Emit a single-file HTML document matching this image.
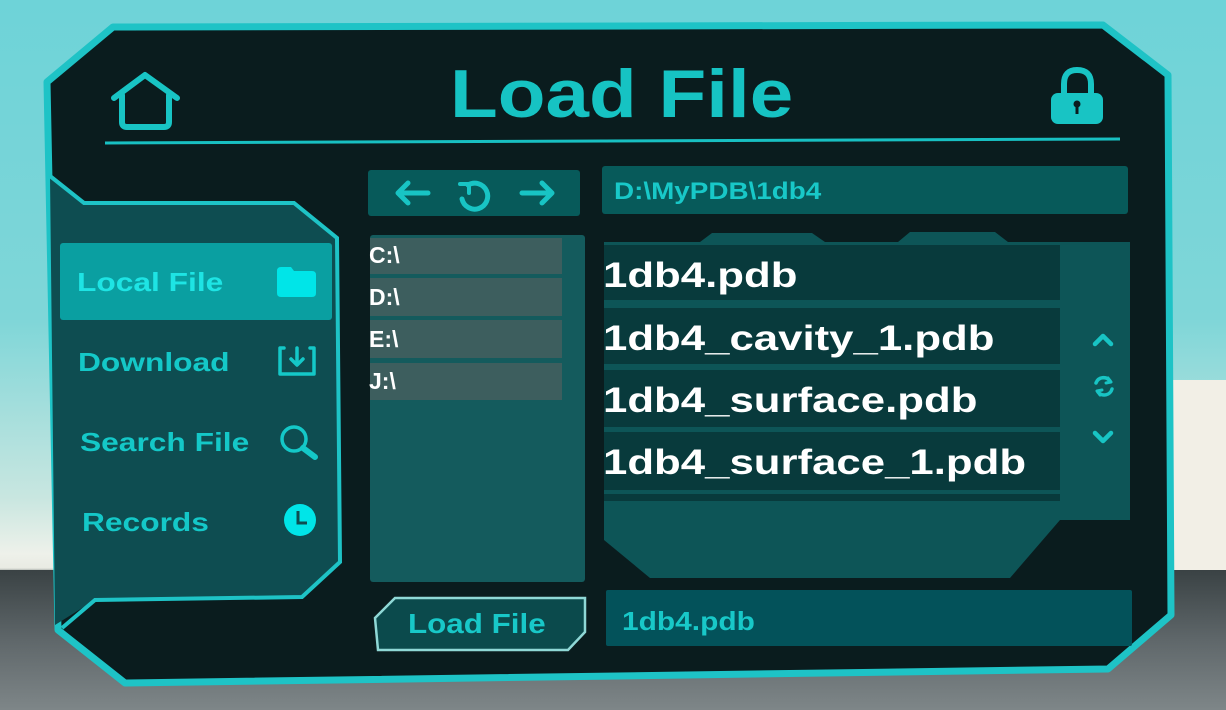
<!DOCTYPE html>
<html><head><meta charset="utf-8"><style>
body{margin:0;width:1226px;height:710px;overflow:hidden;position:relative;font-family:"Liberation Sans",Arial,sans-serif;font-weight:bold;
background:linear-gradient(180deg,#6ed3d8 0%,#7fd6d8 45%,#c8e6e0 70%,#eef1ea 78%,#e9ebe3 80%,#3c4446 81%,#6e7679 95%,#80888a 100%);}
.a{position:absolute}
.t{position:absolute;white-space:nowrap;transform-origin:0 50%;transform:scaleX(1.22)}
</style></head><body>
<div class="a" style="left:1150px;top:380px;width:76px;height:190px;background:#f2efe6"></div>
<div class="a" style="left:0;top:570px;width:1226px;height:140px;background:linear-gradient(180deg,#3a4244,#5f676a 50%,#7e8688)"></div>
<svg class="a" style="left:0;top:0" width="1226" height="710">
<polygon points="113,27 1103,25 1168,75 1171,615 1108,669 125,683 58,630 47,82" fill="#0a1c1e" stroke="#1ec3c6" stroke-width="7" stroke-linejoin="round"/>
<polygon points="50,176 84,203 294,203 337,238 340,562 302,597 95,600 55,625" fill="#0e4d51"/>
<polyline points="50,176 84,203 294,203 337,238 340,562 302,597 95,600 62,628" fill="none" stroke="#1ec3c6" stroke-width="4"/>
<line x1="105" y1="143" x2="1120" y2="139" stroke="#18c0c2" stroke-width="3"/>
<polygon points="700,242 712,233 812,233 825,242 898,242 910,232 995,232 1008,242 1130,242 1130,520 1060,520 1010,578 650,578 604,540 604,242" fill="#0d5557"/>
<polygon points="395,598 585,598 585,632 568,650 378,650 375,618" fill="#0b4a4c" stroke="#8fd8d6" stroke-width="2.5"/>
<g fill="none" stroke="#18c4c4" stroke-width="6" stroke-linecap="round" stroke-linejoin="round">
<polyline points="114,98 145,75 177,98"/>
<path d="M122,95 V122 Q122,127 127,127 H164 Q169,127 169,122 V95"/>
</g>
<path d="M1064,95 V84 Q1064,70 1077,70 Q1091,70 1091,84 V95" fill="none" stroke="#18c4c4" stroke-width="6"/>
<rect x="1051" y="93" width="52" height="31" rx="7" fill="#18c4c4"/>
<circle cx="1077" cy="104" r="3.5" fill="#0a1c1e"/><rect x="1075.5" y="104" width="3" height="10" fill="#0a1c1e"/>
</svg>
<div class="t" style="left:450px;top:54px;font-size:68px;color:#16c3c3;line-height:80px;transform:scaleX(1.15)">Load File</div>

<div class="a" style="left:60px;top:243px;width:272px;height:77px;background:#0a9fa1;border-radius:3px"></div>
<div class="t" style="left:77px;top:267px;font-size:26px;color:#1ee4e4">Local File</div>
<svg class="a" style="left:275px;top:265px" width="44" height="34"><path d="M2,6 Q2,2 6,2 H16 L19,6 H37 Q41,6 41,10 V28 Q41,32 37,32 H6 Q2,32 2,28Z" fill="#00e5e8"/></svg>
<div class="t" style="left:78px;top:347px;font-size:26px;color:#14c8c8">Download</div>
<svg class="a" style="left:276px;top:344px" width="44" height="34" fill="none" stroke="#14c8c8" stroke-width="3.5" stroke-linecap="round" stroke-linejoin="round"><path d="M8,4 H4 V30 H38 V4 H34"/><path d="M21,4 V20 M15,15 L21,21 L27,15"/></svg>
<div class="t" style="left:80px;top:427px;font-size:26px;color:#14c8c8">Search File</div>
<svg class="a" style="left:278px;top:423px" width="44" height="38" fill="none" stroke="#14c8c8" stroke-width="3.5" stroke-linecap="round"><circle cx="16" cy="16" r="12"/><path d="M25,25 L37,34" stroke-width="6"/></svg>
<div class="t" style="left:82px;top:507px;font-size:26px;color:#14c8c8">Records</div>
<svg class="a" style="left:279px;top:502px" width="42" height="36"><circle cx="21" cy="18" r="16" fill="#00e5e8"/><path d="M19,9 V21 H28" fill="none" stroke="#0e4d51" stroke-width="3"/></svg>

<div class="a" style="left:368px;top:170px;width:212px;height:46px;background:#075a5a;border-radius:3px"></div>
<svg class="a" style="left:368px;top:170px" width="212" height="46" fill="none" stroke="#18c4c4" stroke-width="5" stroke-linecap="round" stroke-linejoin="round">
<path d="M30,23 H60 M40,13 L30,23 L40,33"/><path d="M154,23 H184 M174,13 L184,23 L174,33"/>
<path d="M100,15 A13,13 0 1 1 94,29"/><path d="M92,14 H101 V23" stroke-width="4"/></svg>

<div class="a" style="left:370px;top:235px;width:215px;height:347px;background:#145b5d;border-radius:3px"></div>
<div class="a" style="left:370px;top:238px;width:192px;height:36px;background:#3d5e5e"></div>
<div class="a" style="left:370px;top:278px;width:192px;height:38px;background:#3d5e5e"></div>
<div class="a" style="left:370px;top:320px;width:192px;height:38px;background:#3d5e5e"></div>
<div class="a" style="left:370px;top:363px;width:192px;height:37px;background:#3d5e5e"></div>
<div class="t" style="left:369px;top:242px;font-size:23px;color:#fff;transform:none">C:\</div>
<div class="t" style="left:369px;top:284px;font-size:23px;color:#fff;transform:none">D:\</div>
<div class="t" style="left:369px;top:326px;font-size:23px;color:#fff;transform:none">E:\</div>
<div class="t" style="left:369px;top:368px;font-size:23px;color:#fff;transform:none">J:\</div>

<div class="a" style="left:602px;top:166px;width:526px;height:48px;background:#075a5a;border-radius:3px"></div>
<div class="t" style="left:614px;top:178px;font-size:24px;color:#18c8c8;transform:scaleX(1.16)">D:\MyPDB\1db4</div>

<div class="a" style="left:604px;top:245px;width:456px;height:55px;background:#083a3c"></div>
<div class="a" style="left:604px;top:308px;width:456px;height:56px;background:#083a3c"></div>
<div class="a" style="left:604px;top:370px;width:456px;height:57px;background:#083a3c"></div>
<div class="a" style="left:604px;top:432px;width:456px;height:58px;background:#083a3c"></div>
<div class="a" style="left:604px;top:494px;width:456px;height:7px;background:#083a3c"></div>
<div class="t" style="left:603px;top:256px;font-size:35px;color:#fff;transform:scaleX(1.25)">1db4.pdb</div>
<div class="t" style="left:603px;top:319px;font-size:35px;color:#fff;transform:scaleX(1.25)">1db4_cavity_1.pdb</div>
<div class="t" style="left:603px;top:381px;font-size:35px;color:#fff;transform:scaleX(1.25)">1db4_surface.pdb</div>
<div class="t" style="left:603px;top:443px;font-size:35px;color:#fff;transform:scaleX(1.25)">1db4_surface_1.pdb</div>
<svg class="a" style="left:1088px;top:325px" width="32" height="125" fill="none" stroke="#18c4c4" stroke-width="4.5" stroke-linecap="round" stroke-linejoin="round">
<path d="M7,19 L15,11 L23,19"/><path d="M7,108 L15,116 L23,108"/>
<path d="M8,58 A8,8 0 0 1 22,56 M24,64 A8,8 0 0 1 10,67" stroke-width="3.5"/><path d="M20,53 L23,57 L18,58 M12,70 L9,66 L14,65" stroke-width="3"/></svg>

<div class="t" style="left:408px;top:608px;font-size:28px;color:#18c8c8;transform:scaleX(1.12)">Load File</div>
<div class="a" style="left:606px;top:590px;width:526px;height:56px;background:#03525a;border-radius:2px"></div>
<div class="t" style="left:622px;top:606px;font-size:26px;color:#18c8c8;transform:scaleX(1.15)">1db4.pdb</div>
</body></html>
